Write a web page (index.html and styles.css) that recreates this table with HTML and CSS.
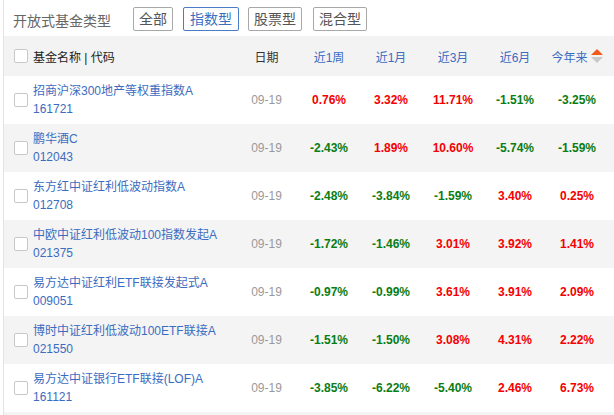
FILE: index.html
```html
<!DOCTYPE html>
<html lang="zh-CN">
<head>
<meta charset="utf-8">
<title>开放式基金类型</title>
<link rel="stylesheet" href="styles.css">
</head>
<body>
<div class="panel">
  <div class="titlebar">
    <span class="title">开放式基金类型</span>
    <span class="btn b1">全部</span>
    <span class="btn b2 active">指数型</span>
    <span class="btn b3">股票型</span>
    <span class="btn b4">混合型</span>
  </div>
  <div class="row head">
    <div class="namecell"><span class="cb"></span><span class="hname">基金名称 | 代码</span></div>
    <div class="c hdate">日期</div>
    <div class="c hcol">近1周</div>
    <div class="c hcol">近1月</div>
    <div class="c hcol">近3月</div>
    <div class="c hcol">近6月</div>
    <div class="c hcol">今年来<span class="sort"><i class="up"></i><i class="down"></i></span></div>
  </div>

  <div class="row">
    <div class="namecell"><span class="cb"></span><div class="fund"><span>招商沪深300地产等权重指数A</span><span>161721</span></div></div>
    <div class="c date">09-19</div>
    <div class="c v red">0.76%</div><div class="c v red">3.32%</div><div class="c v red">11.71%</div><div class="c v green">-1.51%</div><div class="c v green">-3.25%</div>
  </div>
  <div class="row alt">
    <div class="namecell"><span class="cb"></span><div class="fund"><span>鹏华酒C</span><span>012043</span></div></div>
    <div class="c date">09-19</div>
    <div class="c v green">-2.43%</div><div class="c v red">1.89%</div><div class="c v red">10.60%</div><div class="c v green">-5.74%</div><div class="c v green">-1.59%</div>
  </div>
  <div class="row">
    <div class="namecell"><span class="cb"></span><div class="fund"><span>东方红中证红利低波动指数A</span><span>012708</span></div></div>
    <div class="c date">09-19</div>
    <div class="c v green">-2.48%</div><div class="c v green">-3.84%</div><div class="c v green">-1.59%</div><div class="c v red">3.40%</div><div class="c v red">0.25%</div>
  </div>
  <div class="row alt">
    <div class="namecell"><span class="cb"></span><div class="fund"><span>中欧中证红利低波动100指数发起A</span><span>021375</span></div></div>
    <div class="c date">09-19</div>
    <div class="c v green">-1.72%</div><div class="c v green">-1.46%</div><div class="c v red">3.01%</div><div class="c v red">3.92%</div><div class="c v red">1.41%</div>
  </div>
  <div class="row">
    <div class="namecell"><span class="cb"></span><div class="fund"><span>易方达中证红利ETF联接发起式A</span><span>009051</span></div></div>
    <div class="c date">09-19</div>
    <div class="c v green">-0.97%</div><div class="c v green">-0.99%</div><div class="c v red">3.61%</div><div class="c v red">3.91%</div><div class="c v red">2.09%</div>
  </div>
  <div class="row alt">
    <div class="namecell"><span class="cb"></span><div class="fund"><span>博时中证红利低波动100ETF联接A</span><span>021550</span></div></div>
    <div class="c date">09-19</div>
    <div class="c v green">-1.51%</div><div class="c v green">-1.50%</div><div class="c v red">3.08%</div><div class="c v red">4.31%</div><div class="c v red">2.22%</div>
  </div>
  <div class="row">
    <div class="namecell"><span class="cb"></span><div class="fund"><span>易方达中证银行ETF联接(LOF)A</span><span>161121</span></div></div>
    <div class="c date">09-19</div>
    <div class="c v green">-3.85%</div><div class="c v green">-6.22%</div><div class="c v green">-5.40%</div><div class="c v red">2.46%</div><div class="c v red">6.73%</div>
  </div>
  <div class="row alt"></div>
</div>
</body>
</html>
```

FILE: styles.css
```css
html, body {
  margin: 0;
  padding: 0;
  background: #fff;
  font-family: "Liberation Sans", Arial, "Noto Sans CJK SC", sans-serif;
  overflow: hidden;
}
.panel {
  margin-left: 3px;
  border-left: 1px solid #e3e3e3;
  width: 640px;
}
.titlebar {
  height: 36px;
  box-sizing: border-box;
  padding: 7px 0 5px 9px;
  display: flex;
  align-items: center;
}
.title {
  font-size: 14px;
  color: #666;
  margin-right: 22px;
  margin-top: 2px;
}
.btn {
  box-sizing: border-box;
  height: 24px;
  line-height: 22px;
  padding: 0 5px;
  border: 1px solid #a8a8a8;
  border-radius: 2px;
  font-size: 14px;
  color: #555;
}
.btn.active {
  border-color: #4a7cc7;
  color: #3d6fc0;
}
.b2 { margin-left: 10px; padding: 0 6px; }
.b3 { margin-left: 9px; }
.b4 { margin-left: 11px; }

.row {
  display: grid;
  grid-template-columns: 231px 63px repeat(5, 62px);
  height: 48px;
  align-items: center;
  background: #fff;
}
.row.alt { background: #f4f4f4; }
.row.head {
  height: 40px;
  background: #f3f3f3;
}
.namecell {
  display: flex;
  align-items: center;
  padding-left: 10px;
}
.cb {
  box-sizing: border-box;
  width: 14px;
  height: 14px;
  border: 1px solid #c8c8c8;
  border-radius: 2px;
  background: #fff;
  margin-right: 5px;
  flex: none;
}
.hname {
  font-size: 12px;
  color: #222;
}
.fund {
  display: flex;
  flex-direction: column;
  font-size: 12px;
  line-height: 18px;
  color: #3b6cc0;
  white-space: nowrap;
}
.c {
  text-align: center;
  font-size: 12px;
  white-space: nowrap;
}
.hdate { color: #333; }
.hcol {
  color: #3b6cc0;
  display: flex;
  justify-content: center;
  align-items: center;
}
.date { color: #999; }
.v { font-weight: bold; }
.red { color: #f40000; }
.green { color: #0a7d14; }
.sort {
  display: inline-flex;
  flex-direction: column;
  margin-left: 3px;
  gap: 2px;
}
.sort i {
  display: block;
  width: 0;
  height: 0;
  border-left: 6px solid transparent;
  border-right: 6px solid transparent;
}
.sort .up { border-bottom: 6px solid #f25a1c; }
.sort .down { border-top: 6px solid #c8c8c8; }
```
